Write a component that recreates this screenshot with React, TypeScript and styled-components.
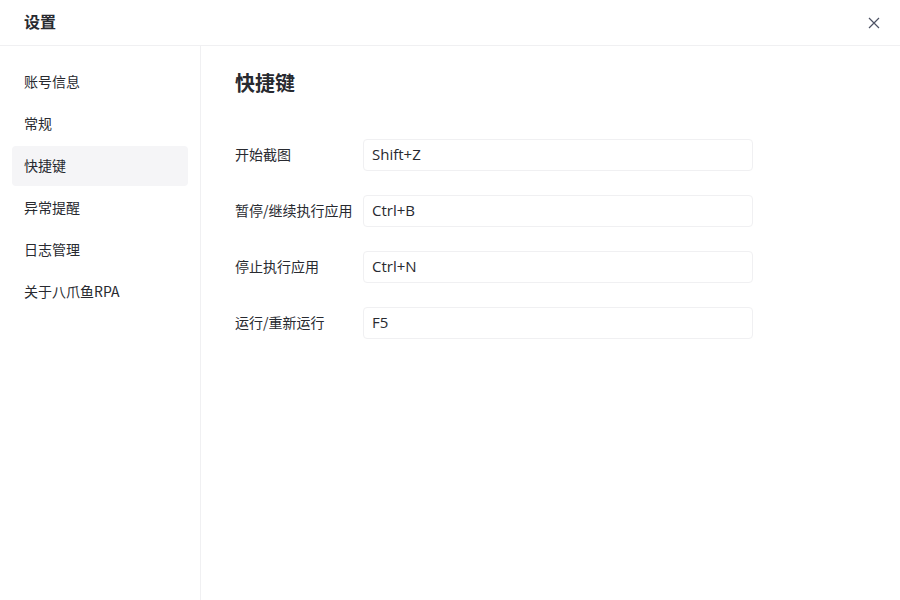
import React from "react";
import styled, { createGlobalStyle } from "styled-components";

const GlobalStyle = createGlobalStyle`
  html, body {
    margin: 0;
    padding: 0;
    background: #fff;
  }
  body {
    font-family: "Noto Sans CJK SC", "Open Sans", "Noto Sans", sans-serif;
    color: #282a30;
  }
`;

const Page = styled.div`
  width: 900px;
  height: 600px;
  display: flex;
  flex-direction: column;
  overflow: hidden;
`;

const Header = styled.header`
  height: 45px;
  flex: none;
  box-sizing: content-box;
  border-bottom: 1px solid #f0f0f2;
  display: flex;
  align-items: center;
  justify-content: space-between;
  padding: 0 19px 0 24px;
`;

const Title = styled.h1`
  margin: 0 0 2px;
  font-size: 16px;
  font-weight: 700;
  line-height: 43px;
`;

const CloseButton = styled.button`
  width: 14px;
  height: 14px;
  padding: 0;
  border: 0;
  background: none;
  color: #4d5264;
  display: flex;
`;

const Body = styled.div`
  flex: 1;
  display: flex;
`;

const Sidebar = styled.nav`
  width: 200px;
  flex: none;
  box-sizing: content-box;
  border-right: 1px solid #f0f0f2;
  padding-top: 16px;
  display: flex;
  flex-direction: column;
  gap: 2px;
  align-items: center;
`;

const NavItem = styled.div<{ $active?: boolean }>`
  width: 176px;
  height: 40px;
  box-sizing: border-box;
  padding-left: 12px;
  border-radius: 4px;
  font-size: 14px;
  line-height: 38px;
  background: ${(props) => (props.$active ? "#f5f5f7" : "transparent")};
`;

const Content = styled.main`
  flex: 1;
  padding: 22px 0 0 34px;
`;

const Heading = styled.h2`
  margin: 0 0 41px;
  font-size: 20px;
  font-weight: 700;
  line-height: 30px;
`;

const Form = styled.div`
  display: flex;
  flex-direction: column;
  gap: 24px;
`;

const Row = styled.div`
  display: flex;
  align-items: center;
  height: 32px;
`;

const Label = styled.label`
  width: 128px;
  flex: none;
  font-size: 14px;
  line-height: 30px;
  margin-bottom: 2px;
  white-space: nowrap;
`;

const KeyInput = styled.input`
  width: 390px;
  height: 32px;
  box-sizing: border-box;
  padding: 0 8px 2px;
  border: 1px solid #f0f0f2;
  border-radius: 4px;
  outline: none;
  background: #fff;
  color: #282a30;
  font-family: "Open Sans", "Noto Sans", sans-serif;
  font-size: 15px;
`;

const menu = ["账号信息", "常规", "快捷键", "异常提醒", "日志管理", "关于八爪鱼RPA"];

const shortcuts = [
  { label: "开始截图", value: "Shift+Z" },
  { label: "暂停/继续执行应用", value: "Ctrl+B" },
  { label: "停止执行应用", value: "Ctrl+N" },
  { label: "运行/重新运行", value: "F5" },
];

export default function App() {
  return (
    <Page>
      <GlobalStyle />
      <Header>
        <Title>设置</Title>
        <CloseButton aria-label="关闭">
          <svg width="14" height="14" viewBox="0 0 14 14" fill="none">
            <path d="M2 2 L12 12 M12 2 L2 12" stroke="currentColor" strokeWidth="1.2" />
          </svg>
        </CloseButton>
      </Header>
      <Body>
        <Sidebar>
          {menu.map((name) => (
            <NavItem key={name} $active={name === "快捷键"}>
              {name}
            </NavItem>
          ))}
        </Sidebar>
        <Content>
          <Heading>快捷键</Heading>
          <Form>
            {shortcuts.map((item) => (
              <Row key={item.label}>
                <Label>{item.label}</Label>
                <KeyInput defaultValue={item.value} readOnly />
              </Row>
            ))}
          </Form>
        </Content>
      </Body>
    </Page>
  );
}
